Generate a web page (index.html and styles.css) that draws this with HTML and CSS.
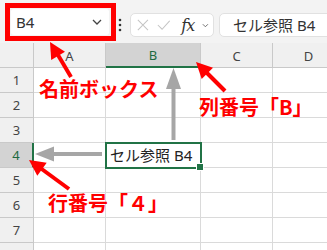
FILE: index.html
```html
<!DOCTYPE html>
<html lang="ja">

<head>
    <title>セル参照</title>
    <link rel="stylesheet" href="styles.css">
</head>

<body>
    <div class="sheet">
        <header class="toolbar">
            <div class="callout">
                <div class="namebox">
                    <span>B4</span>
                    <svg width="10" height="6" viewBox="0 0 10 6"><path d="M1 1 L5 5 L9 1" fill="none" stroke="#444" stroke-width="1.3"/></svg>
                </div>
            </div>
            <svg class="grip" width="4" height="14" viewBox="0 0 4 14">
                <circle cx="2" cy="2" r="1.3" fill="#333"/>
                <circle cx="2" cy="7" r="1.3" fill="#333"/>
                <circle cx="2" cy="12" r="1.3" fill="#333"/>
            </svg>
            <div class="fbuttons">
                <svg width="14" height="14" viewBox="0 0 14 14"><path d="M1 1 L13 13 M13 1 L1 13" stroke="#c4c4c4" stroke-width="1.2"/></svg>
                <svg width="16" height="14" viewBox="0 0 16 14"><path d="M1 7 L6 12 L15 2" fill="none" stroke="#c4c4c4" stroke-width="1.2"/></svg>
                <span class="fx">fx</span>
                <svg width="8" height="5" viewBox="0 0 8 5"><path d="M1 1 L4 4 L7 1" fill="none" stroke="#666" stroke-width="1.1"/></svg>
            </div>
            <div class="formula">セル参照 B4</div>
        </header>

        <div class="grid">
            <div class="corner"></div>
            <div class="colhead">A</div>
            <div class="colhead active">B</div>
            <div class="colhead">C</div>
            <div class="colhead">D</div>

            <div class="rowhead">1</div><div></div><div></div><div></div><div></div>
            <div class="rowhead">2</div><div></div><div></div><div></div><div></div>
            <div class="rowhead">3</div><div></div><div></div><div></div><div></div>
            <div class="rowhead active">4</div><div></div><div class="selected">セル参照 B4</div><div></div><div></div>
            <div class="rowhead">5</div><div></div><div></div><div></div><div></div>
            <div class="rowhead">6</div><div></div><div></div><div></div><div></div>
            <div class="rowhead">7</div><div></div><div></div><div></div><div></div>
            <div class="rowhead"></div><div></div><div></div><div></div><div></div>
        </div>

        <svg class="arrows" width="327" height="250" viewBox="0 0 327 250">
            <!-- gray: cell to headers -->
            <line x1="173.5" y1="86" x2="173.5" y2="140" stroke="#a6a6a6" stroke-width="4"/>
            <polygon points="173.5,68 166,89 181,89" fill="#a6a6a6"/>
            <line x1="52" y1="154" x2="102" y2="154" stroke="#a6a6a6" stroke-width="4"/>
            <polygon points="35,154 54,146.5 54,161.5" fill="#a6a6a6"/>
            <!-- red callouts -->
            <line x1="71" y1="77" x2="58" y2="55" stroke="#ff0000" stroke-width="4"/>
            <polygon points="50,42 65,51.7 51.2,59.9" fill="#ff0000"/>
            <line x1="225" y1="91" x2="206" y2="72" stroke="#ff0000" stroke-width="4"/>
            <polygon points="196,62 213,67.7 201.7,79" fill="#ff0000"/>
            <line x1="69" y1="189" x2="41" y2="168.5" stroke="#ff0000" stroke-width="4"/>
            <polygon points="29,160 46.7,162.8 37.3,175.8" fill="#ff0000"/>
        </svg>

        <div class="label label-name">名前ボックス</div>
        <div class="label label-col">列番号「B」</div>
        <div class="label label-row">行番号「４」</div>
    </div>
</body>

</html>
```

FILE: styles.css
```css
:root {
    font-family: "Noto Sans", "Noto Sans CJK JP", sans-serif;
}

body {
    margin: 0;
    background-color: #ffffff;
}

.sheet {
    position: relative;
    width: 327px;
    height: 250px;
    overflow: hidden;
}

.toolbar {
    display: flex;
    align-items: flex-start;
    height: 43px;
    box-sizing: border-box;
    padding: 3px 0 0 5px;
    background-color: #f3f3f3;
}

.toolbar>* {
    flex: none;
}

.callout {
    width: 111px;
    height: 38px;
    box-sizing: border-box;
    border: 5px solid #ff0000;
    padding: 1px 2px 1px 1px;
}

.namebox {
    display: flex;
    align-items: center;
    justify-content: space-between;
    height: 100%;
    box-sizing: border-box;
    padding: 0 7px 0 5px;
    background-color: #ffffff;
    border-radius: 3px;
    font-size: 15px;
    color: #333333;
}

.grip {
    margin: 15px 0 0 2px;
}

.fbuttons {
    display: flex;
    align-items: center;
    gap: 8px;
    width: 84px;
    height: 24px;
    box-sizing: border-box;
    margin: 10px 0 0 8px;
    padding: 0 4px 0 6px;
    background-color: #ffffff;
    border: 1px solid #e1e1e1;
    border-radius: 5px;
}

.fx {
    font-family: "DejaVu Serif", "Liberation Serif", serif;
    font-style: italic;
    font-size: 16px;
    color: #333333;
    margin-left: 3px;
    letter-spacing: -1px;
}

.formula {
    width: 120px;
    height: 24px;
    box-sizing: border-box;
    margin: 10px 0 0 5px;
    padding: 1px 0 0 13px;
    background-color: #ffffff;
    border: 1px solid #e1e1e1;
    border-radius: 5px;
    font-size: 15px;
    line-height: 20px;
    color: #333333;
    white-space: nowrap;
}

.grid {
    display: grid;
    grid-template-columns: 34px 72px 95px 72px 72px;
    grid-template-rows: 25px repeat(8, 25px);
}

.grid>div {
    box-sizing: border-box;
    border-right: 1px solid #dadada;
    border-bottom: 1px solid #dadada;
}

.grid>.corner,
.grid>.colhead,
.grid>.rowhead {
    background-color: #f0f0f0;
    border-color: #c9c9c9;
    color: #444444;
    font-size: 13px;
    display: flex;
    align-items: center;
    justify-content: center;
}

.grid>.colhead {
    padding-top: 1px;
}

.grid>.colhead.active {
    background-color: #d3d3d3;
    border-bottom: 2px solid #217346;
    color: #1e6a41;
}

.grid>.rowhead.active {
    background-color: #d3d3d3;
    border-right: 2px solid #217346;
    color: #1e6a41;
}

.grid>.selected {
    position: relative;
    outline: 2px solid #217346;
    outline-offset: -1px;
    padding-left: 4px;
    font-size: 15px;
    line-height: 24px;
    color: #222222;
    white-space: nowrap;
}

.selected::after {
    content: "";
    position: absolute;
    right: -4px;
    bottom: -4px;
    width: 6px;
    height: 6px;
    background-color: #217346;
    border: 1px solid #ffffff;
}

.arrows {
    position: absolute;
    left: 0;
    top: 0;
}

.label {
    position: absolute;
    font-family: "Noto Sans CJK JP", sans-serif;
    font-weight: bold;
    font-size: 20px;
    line-height: 24px;
    color: #ff0000;
    white-space: nowrap;
}

.label-name {
    left: 39px;
    top: 77px;
}

.label-col {
    left: 199px;
    top: 95px;
}

.label-row {
    left: 48px;
    top: 191px;
}
```
